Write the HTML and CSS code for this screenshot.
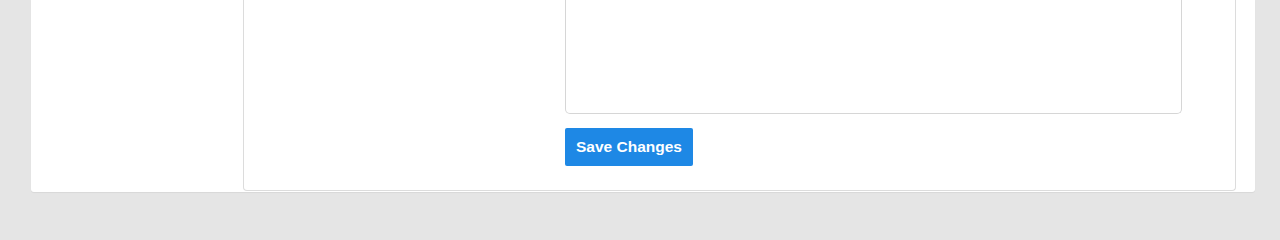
FILE: index.html
```html
<!DOCTYPE html>
<html lang="en">
<head>
<meta charset="utf-8">
<title>Settings</title>
<link rel="stylesheet" href="styles.css">
</head>
<body>
<div class="page">
  <div class="card">
    <aside class="sidebar"></aside>
    <section class="panel">
      <form class="form">
        <textarea class="field" aria-label="Details"></textarea>
        <button type="button" class="btn-save">Save Changes</button>
      </form>
    </section>
  </div>
</div>
</body>
</html>
```
FILE: styles.css
```css
html, body {
  margin: 0;
  padding: 0;
  background: #e5e5e5;
}
.page {
  padding: 0 25px 20px 31px;
}
.card {
  display: flex;
  background: #fff;
  height: 192px;
  border-radius: 0 0 3px 3px;
  box-shadow: 0 1px 1px rgba(0,0,0,0.06);
  padding-right: 19px;
}
.sidebar {
  width: 212px;
  flex: none;
}
.panel {
  flex: 1;
  height: 191px;
  box-sizing: border-box;
  border: 1px solid #dcdcdc;
  border-top: none;
  border-radius: 0 0 4px 4px;
  padding-left: 321px;
}
.form {
  display: flex;
  flex-direction: column;
  align-items: flex-start;
}
.field {
  display: block;
  width: 617px;
  height: 114px;
  box-sizing: border-box;
  border: 1px solid #d6d6d6;
  border-top: none;
  border-radius: 0 0 5px 5px;
  margin: 0;
  resize: none;
  outline: none;
  background: #fff;
}
.btn-save {
  margin-top: 14px;
  height: 38px;
  width: 128px;
  padding: 0 0 1px 0;
  border: none;
  border-radius: 2px;
  background: #1e88e5;
  color: #fff;
  font-family: "Liberation Sans", Arial, sans-serif;
  font-weight: bold;
  font-size: 15.5px;
  cursor: pointer;
}
```
